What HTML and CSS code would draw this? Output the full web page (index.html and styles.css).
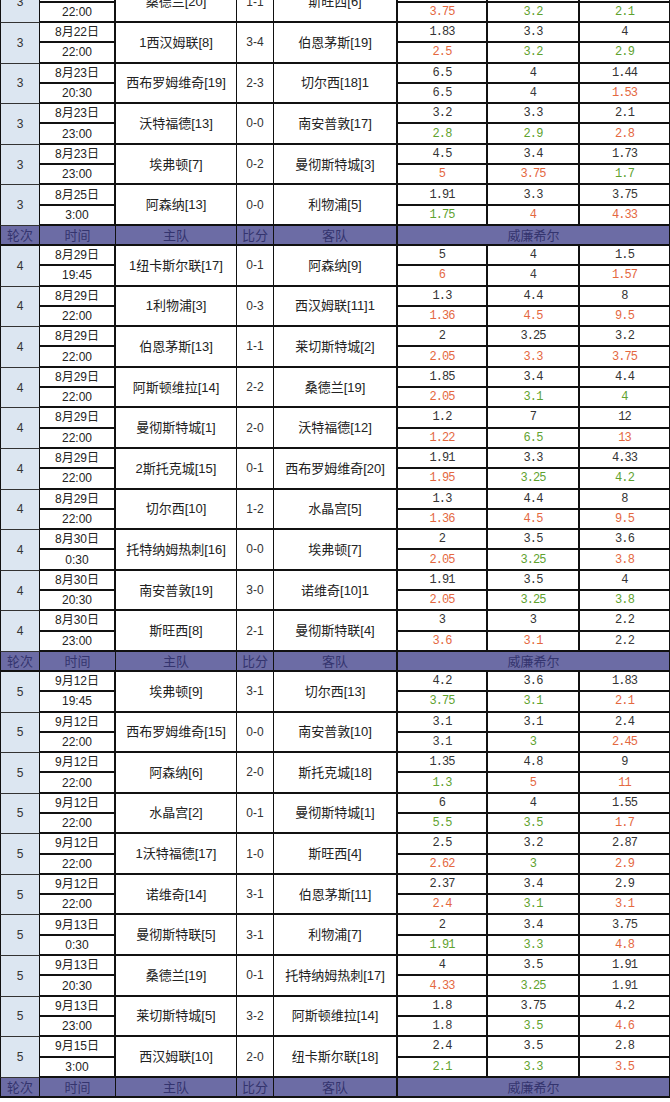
FILE: index.html
```html
<!DOCTYPE html>
<html lang="zh-CN">
<head>
<meta charset="utf-8">
<title>赛程赔率</title>
<link rel="stylesheet" href="styles.css">
</head>
<body>
<div class="sheet">

  <div class="match">
    <div class="c rd">3</div><div class="c dt">8月22日</div><div class="c tm">桑德兰[20]</div><div class="c sc">1-1</div><div class="c tm away">斯旺西[6]</div>
    <div class="c od">2.1</div><div class="c od">3.3</div><div class="c od last">3.4</div>
    <div class="c hr">22:00</div><div class="c od up">3.75</div><div class="c od dn">3.2</div><div class="c od dn last">2.1</div>
  </div>
  <div class="match">
    <div class="c rd">3</div><div class="c dt">8月22日</div><div class="c tm">1西汉姆联[8]</div><div class="c sc">3-4</div><div class="c tm away">伯恩茅斯[19]</div>
    <div class="c od">1.83</div><div class="c od">3.3</div><div class="c od last">4</div>
    <div class="c hr">22:00</div><div class="c od up">2.5</div><div class="c od dn">3.2</div><div class="c od dn last">2.9</div>
  </div>
  <div class="match">
    <div class="c rd">3</div><div class="c dt">8月23日</div><div class="c tm">西布罗姆维奇[19]</div><div class="c sc">2-3</div><div class="c tm away">切尔西[18]1</div>
    <div class="c od">6.5</div><div class="c od">4</div><div class="c od last">1.44</div>
    <div class="c hr">20:30</div><div class="c od eq">6.5</div><div class="c od eq">4</div><div class="c od up last">1.53</div>
  </div>
  <div class="match">
    <div class="c rd">3</div><div class="c dt">8月23日</div><div class="c tm">沃特福德[13]</div><div class="c sc">0-0</div><div class="c tm away">南安普敦[17]</div>
    <div class="c od">3.2</div><div class="c od">3.3</div><div class="c od last">2.1</div>
    <div class="c hr">23:00</div><div class="c od dn">2.8</div><div class="c od dn">2.9</div><div class="c od up last">2.8</div>
  </div>
  <div class="match">
    <div class="c rd">3</div><div class="c dt">8月23日</div><div class="c tm">埃弗顿[7]</div><div class="c sc">0-2</div><div class="c tm away">曼彻斯特城[3]</div>
    <div class="c od">4.5</div><div class="c od">3.4</div><div class="c od last">1.73</div>
    <div class="c hr">23:00</div><div class="c od up">5</div><div class="c od up">3.75</div><div class="c od dn last">1.7</div>
  </div>
  <div class="match">
    <div class="c rd">3</div><div class="c dt">8月25日</div><div class="c tm">阿森纳[13]</div><div class="c sc">0-0</div><div class="c tm away">利物浦[5]</div>
    <div class="c od">1.91</div><div class="c od">3.3</div><div class="c od last">3.75</div>
    <div class="c hr">3:00</div><div class="c od dn">1.75</div><div class="c od up">4</div><div class="c od up last">4.33</div>
  </div>

  <div class="hdr">
    <div class="hc first">轮次</div><div class="hc">时间</div><div class="hc">主队</div><div class="hc">比分</div><div class="hc away">客队</div><div class="hc wh">威廉希尔</div>
  </div>

  <div class="match">
    <div class="c rd">4</div><div class="c dt">8月29日</div><div class="c tm">1纽卡斯尔联[17]</div><div class="c sc">0-1</div><div class="c tm away">阿森纳[9]</div>
    <div class="c od">5</div><div class="c od">4</div><div class="c od last">1.5</div>
    <div class="c hr">19:45</div><div class="c od up">6</div><div class="c od eq">4</div><div class="c od up last">1.57</div>
  </div>
  <div class="match">
    <div class="c rd">4</div><div class="c dt">8月29日</div><div class="c tm">1利物浦[3]</div><div class="c sc">0-3</div><div class="c tm away">西汉姆联[11]1</div>
    <div class="c od">1.3</div><div class="c od">4.4</div><div class="c od last">8</div>
    <div class="c hr">22:00</div><div class="c od up">1.36</div><div class="c od up">4.5</div><div class="c od up last">9.5</div>
  </div>
  <div class="match">
    <div class="c rd">4</div><div class="c dt">8月29日</div><div class="c tm">伯恩茅斯[13]</div><div class="c sc">1-1</div><div class="c tm away">莱切斯特城[2]</div>
    <div class="c od">2</div><div class="c od">3.25</div><div class="c od last">3.2</div>
    <div class="c hr">22:00</div><div class="c od up">2.05</div><div class="c od up">3.3</div><div class="c od up last">3.75</div>
  </div>
  <div class="match">
    <div class="c rd">4</div><div class="c dt">8月29日</div><div class="c tm">阿斯顿维拉[14]</div><div class="c sc">2-2</div><div class="c tm away">桑德兰[19]</div>
    <div class="c od">1.85</div><div class="c od">3.4</div><div class="c od last">4.4</div>
    <div class="c hr">22:00</div><div class="c od up">2.05</div><div class="c od dn">3.1</div><div class="c od dn last">4</div>
  </div>
  <div class="match">
    <div class="c rd">4</div><div class="c dt">8月29日</div><div class="c tm">曼彻斯特城[1]</div><div class="c sc">2-0</div><div class="c tm away">沃特福德[12]</div>
    <div class="c od">1.2</div><div class="c od">7</div><div class="c od last">12</div>
    <div class="c hr">22:00</div><div class="c od up">1.22</div><div class="c od dn">6.5</div><div class="c od up last">13</div>
  </div>
  <div class="match">
    <div class="c rd">4</div><div class="c dt">8月29日</div><div class="c tm">2斯托克城[15]</div><div class="c sc">0-1</div><div class="c tm away">西布罗姆维奇[20]</div>
    <div class="c od">1.91</div><div class="c od">3.3</div><div class="c od last">4.33</div>
    <div class="c hr">22:00</div><div class="c od up">1.95</div><div class="c od dn">3.25</div><div class="c od dn last">4.2</div>
  </div>
  <div class="match">
    <div class="c rd">4</div><div class="c dt">8月29日</div><div class="c tm">切尔西[10]</div><div class="c sc">1-2</div><div class="c tm away">水晶宫[5]</div>
    <div class="c od">1.3</div><div class="c od">4.4</div><div class="c od last">8</div>
    <div class="c hr">22:00</div><div class="c od up">1.36</div><div class="c od up">4.5</div><div class="c od up last">9.5</div>
  </div>
  <div class="match">
    <div class="c rd">4</div><div class="c dt">8月30日</div><div class="c tm">托特纳姆热刺[16]</div><div class="c sc">0-0</div><div class="c tm away">埃弗顿[7]</div>
    <div class="c od">2</div><div class="c od">3.5</div><div class="c od last">3.6</div>
    <div class="c hr">0:30</div><div class="c od up">2.05</div><div class="c od dn">3.25</div><div class="c od up last">3.8</div>
  </div>
  <div class="match">
    <div class="c rd">4</div><div class="c dt">8月30日</div><div class="c tm">南安普敦[19]</div><div class="c sc">3-0</div><div class="c tm away">诺维奇[10]1</div>
    <div class="c od">1.91</div><div class="c od">3.5</div><div class="c od last">4</div>
    <div class="c hr">20:30</div><div class="c od up">2.05</div><div class="c od dn">3.25</div><div class="c od dn last">3.8</div>
  </div>
  <div class="match">
    <div class="c rd">4</div><div class="c dt">8月30日</div><div class="c tm">斯旺西[8]</div><div class="c sc">2-1</div><div class="c tm away">曼彻斯特联[4]</div>
    <div class="c od">3</div><div class="c od">3</div><div class="c od last">2.2</div>
    <div class="c hr">23:00</div><div class="c od up">3.6</div><div class="c od up">3.1</div><div class="c od eq last">2.2</div>
  </div>

  <div class="hdr">
    <div class="hc first">轮次</div><div class="hc">时间</div><div class="hc">主队</div><div class="hc">比分</div><div class="hc away">客队</div><div class="hc wh">威廉希尔</div>
  </div>

  <div class="match">
    <div class="c rd">5</div><div class="c dt">9月12日</div><div class="c tm">埃弗顿[9]</div><div class="c sc">3-1</div><div class="c tm away">切尔西[13]</div>
    <div class="c od">4.2</div><div class="c od">3.6</div><div class="c od last">1.83</div>
    <div class="c hr">19:45</div><div class="c od dn">3.75</div><div class="c od dn">3.1</div><div class="c od up last">2.1</div>
  </div>
  <div class="match">
    <div class="c rd">5</div><div class="c dt">9月12日</div><div class="c tm">西布罗姆维奇[15]</div><div class="c sc">0-0</div><div class="c tm away">南安普敦[10]</div>
    <div class="c od">3.1</div><div class="c od">3.1</div><div class="c od last">2.4</div>
    <div class="c hr">22:00</div><div class="c od eq">3.1</div><div class="c od dn">3</div><div class="c od up last">2.45</div>
  </div>
  <div class="match">
    <div class="c rd">5</div><div class="c dt">9月12日</div><div class="c tm">阿森纳[6]</div><div class="c sc">2-0</div><div class="c tm away">斯托克城[18]</div>
    <div class="c od">1.35</div><div class="c od">4.8</div><div class="c od last">9</div>
    <div class="c hr">22:00</div><div class="c od dn">1.3</div><div class="c od up">5</div><div class="c od up last">11</div>
  </div>
  <div class="match">
    <div class="c rd">5</div><div class="c dt">9月12日</div><div class="c tm">水晶宫[2]</div><div class="c sc">0-1</div><div class="c tm away">曼彻斯特城[1]</div>
    <div class="c od">6</div><div class="c od">4</div><div class="c od last">1.55</div>
    <div class="c hr">22:00</div><div class="c od dn">5.5</div><div class="c od dn">3.5</div><div class="c od up last">1.7</div>
  </div>
  <div class="match">
    <div class="c rd">5</div><div class="c dt">9月12日</div><div class="c tm">1沃特福德[17]</div><div class="c sc">1-0</div><div class="c tm away">斯旺西[4]</div>
    <div class="c od">2.5</div><div class="c od">3.2</div><div class="c od last">2.87</div>
    <div class="c hr">22:00</div><div class="c od up">2.62</div><div class="c od dn">3</div><div class="c od up last">2.9</div>
  </div>
  <div class="match">
    <div class="c rd">5</div><div class="c dt">9月12日</div><div class="c tm">诺维奇[14]</div><div class="c sc">3-1</div><div class="c tm away">伯恩茅斯[11]</div>
    <div class="c od">2.37</div><div class="c od">3.4</div><div class="c od last">2.9</div>
    <div class="c hr">22:00</div><div class="c od up">2.4</div><div class="c od dn">3.1</div><div class="c od up last">3.1</div>
  </div>
  <div class="match">
    <div class="c rd">5</div><div class="c dt">9月13日</div><div class="c tm">曼彻斯特联[5]</div><div class="c sc">3-1</div><div class="c tm away">利物浦[7]</div>
    <div class="c od">2</div><div class="c od">3.4</div><div class="c od last">3.75</div>
    <div class="c hr">0:30</div><div class="c od dn">1.91</div><div class="c od dn">3.3</div><div class="c od up last">4.8</div>
  </div>
  <div class="match">
    <div class="c rd">5</div><div class="c dt">9月13日</div><div class="c tm">桑德兰[19]</div><div class="c sc">0-1</div><div class="c tm away">托特纳姆热刺[17]</div>
    <div class="c od">4</div><div class="c od">3.5</div><div class="c od last">1.91</div>
    <div class="c hr">20:30</div><div class="c od up">4.33</div><div class="c od dn">3.25</div><div class="c od eq last">1.91</div>
  </div>
  <div class="match">
    <div class="c rd">5</div><div class="c dt">9月13日</div><div class="c tm">莱切斯特城[5]</div><div class="c sc">3-2</div><div class="c tm away">阿斯顿维拉[14]</div>
    <div class="c od">1.8</div><div class="c od">3.75</div><div class="c od last">4.2</div>
    <div class="c hr">23:00</div><div class="c od eq">1.8</div><div class="c od dn">3.5</div><div class="c od up last">4.6</div>
  </div>
  <div class="match">
    <div class="c rd">5</div><div class="c dt">9月15日</div><div class="c tm">西汉姆联[10]</div><div class="c sc">2-0</div><div class="c tm away">纽卡斯尔联[18]</div>
    <div class="c od">2.4</div><div class="c od">3.5</div><div class="c od last">2.8</div>
    <div class="c hr">3:00</div><div class="c od dn">2.1</div><div class="c od dn">3.3</div><div class="c od up last">3.5</div>
  </div>

  <div class="hdr">
    <div class="hc first">轮次</div><div class="hc">时间</div><div class="hc">主队</div><div class="hc">比分</div><div class="hc away">客队</div><div class="hc wh">威廉希尔</div>
  </div>

</div>
</body>
</html>
```

FILE: styles.css
```css
* {
  box-sizing: border-box;
}

html,
body {
  margin: 0;
  padding: 0;
  background: #ffffff;
}

body {
  font-family: "Liberation Sans", "Noto Sans CJK SC", sans-serif;
  font-size: 12px;
  color: #222222;
  overflow: hidden;
}

.sheet {
  width: 670px;
  margin-top: -17.6px;
  display: flex;
  flex-direction: column;
}

.match,
.hdr {
  display: grid;
  grid-template-columns: 40px 76px 121px 37px 124px 90px 92px 90px;
}

.match {
  grid-template-rows: 20.3px 20.3px;
}

.hdr {
  height: 20px;
  background: #6c6ca5;
}

.c {
  display: flex;
  align-items: center;
  justify-content: center;
  border-right: 1px solid #111;
  border-bottom: 2px solid #111;
  white-space: nowrap;
  overflow: hidden;
  line-height: 1;
}

.rd {
  grid-row: span 2;
  background: #dce6f1;
  border-left: 1px solid #111;
  border-bottom: 1px solid #333;
  color: #333;
  font-size: 12px;
}

.dt,
.hr {
  border-right-width: 2px;
  color: #222;
}

.tm {
  grid-row: span 2;
  font-size: 13px;
  color: #222;
}

.sc {
  grid-row: span 2;
  color: #333;
}

.away {
  border-right-width: 2px;
}

.od {
  border-right-width: 2px;
  font-family: "Liberation Mono", "DejaVu Sans Mono", monospace;
  font-size: 12px;
  letter-spacing: -0.9px;
  color: #333;
}

.od.last {
  border-right-width: 1px;
}

.up {
  color: #e4683f;
}

.dn {
  color: #5fa22f;
}

.eq {
  color: #3a3a3a;
}

.hc {
  display: flex;
  align-items: center;
  justify-content: center;
  border-right: 1px solid #111;
  border-bottom: 2px solid #111;
  font-family: "Noto Sans CJK SC", sans-serif;
  font-size: 13px;
  color: #34346e;
  line-height: 1;
}

.hc.first {
  border-left: 1px solid #111;
}

.hc.away {
  border-right-width: 2px;
}

.hc.wh {
  grid-column: span 3;
}
```
